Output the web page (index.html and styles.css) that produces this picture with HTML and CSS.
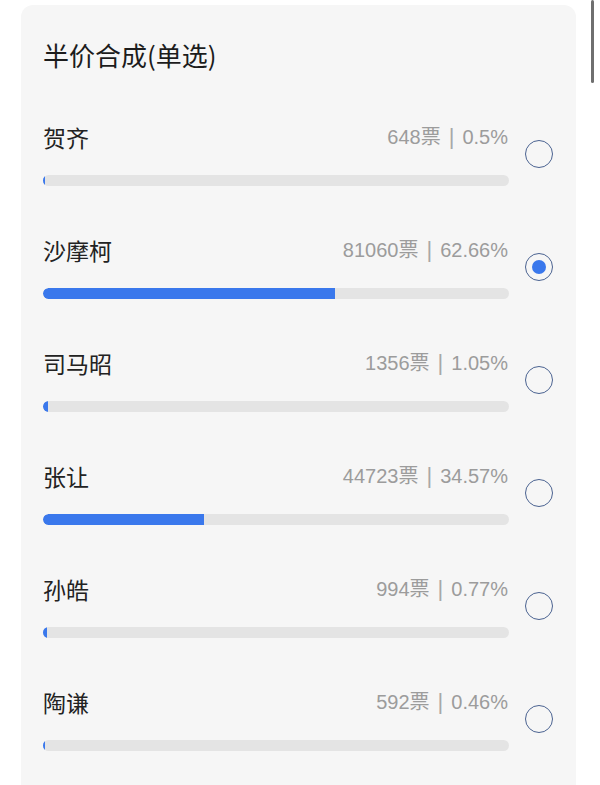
FILE: index.html
```html
<!DOCTYPE html>
<html lang="zh">
<head>
<meta charset="utf-8">
<title>半价合成(单选)</title>
<link rel="stylesheet" href="styles.css">
</head>
<body>
<div class="scrollbar"></div>
<section class="card">
  <h1 class="title">半价合成(单选)</h1>
  <ul class="options">
    <li class="option">
      <div class="info">
        <div class="head"><span class="name">贺齐</span><span class="stats">648票<span class="sep">|</span>0.5%</span></div>
        <div class="bar"><div class="fill" style="width:0.5%"></div></div>
      </div>
      <span class="radio"></span>
    </li>
    <li class="option">
      <div class="info">
        <div class="head"><span class="name">沙摩柯</span><span class="stats">81060票<span class="sep">|</span>62.66%</span></div>
        <div class="bar"><div class="fill" style="width:62.66%"></div></div>
      </div>
      <span class="radio checked"></span>
    </li>
    <li class="option">
      <div class="info">
        <div class="head"><span class="name">司马昭</span><span class="stats">1356票<span class="sep">|</span>1.05%</span></div>
        <div class="bar"><div class="fill" style="width:1.05%"></div></div>
      </div>
      <span class="radio"></span>
    </li>
    <li class="option">
      <div class="info">
        <div class="head"><span class="name">张让</span><span class="stats">44723票<span class="sep">|</span>34.57%</span></div>
        <div class="bar"><div class="fill" style="width:34.57%"></div></div>
      </div>
      <span class="radio"></span>
    </li>
    <li class="option">
      <div class="info">
        <div class="head"><span class="name">孙皓</span><span class="stats">994票<span class="sep">|</span>0.77%</span></div>
        <div class="bar"><div class="fill" style="width:0.77%"></div></div>
      </div>
      <span class="radio"></span>
    </li>
    <li class="option">
      <div class="info">
        <div class="head"><span class="name">陶谦</span><span class="stats">592票<span class="sep">|</span>0.46%</span></div>
        <div class="bar"><div class="fill" style="width:0.46%"></div></div>
      </div>
      <span class="radio"></span>
    </li>
  </ul>
</section>
</body>
</html>
```

FILE: styles.css
```css
html, body {
  margin: 0;
  padding: 0;
  background: #ffffff;
}
body {
  font-family: "Noto Sans CJK SC", "Noto Sans", sans-serif;
  color: #222222;
  overflow: hidden;
  height: 785px;
}
.scrollbar {
  position: absolute;
  left: 591px;
  top: 0;
  width: 3px;
  height: 83px;
  border-radius: 2px;
  background: #6f6f6f;
}
.card {
  margin: 5px 0 0 21px;
  width: 555px;
  height: 780px;
  box-sizing: border-box;
  padding: 33px 23px 0 22px;
  background: #f6f6f6;
  border-radius: 12px 12px 0 0;
}
.title {
  margin: 0;
  font-size: 26px;
  font-weight: 400;
  line-height: 34px;
  color: #1c1c1c;
}
.options {
  list-style: none;
  margin: 50px 0 0 0;
  padding: 0;
}
.option {
  display: flex;
  align-items: center;
  gap: 16px;
  margin-bottom: 49px;
}
.option:last-child {
  margin-bottom: 0;
}
.info {
  flex: 1;
  min-width: 0;
}
.head {
  display: flex;
  justify-content: space-between;
  align-items: center;
  height: 30px;
}
.name {
  font-size: 23px;
  line-height: 30px;
  color: #222222;
}
.stats {
  font-family: "Liberation Sans", "Noto Sans CJK SC", sans-serif;
  font-size: 20px;
  line-height: 30px;
  color: #9c9c9c;
  margin-right: 1px;
}
.stats .sep {
  display: inline-block;
  margin: 0 8px;
  font-size: 22px;
  color: #a8a8a8;
}
.bar {
  margin-top: 23px;
  height: 11px;
  border-radius: 6px;
  background: #e4e4e4;
  overflow: hidden;
}
.fill {
  height: 100%;
  min-width: 2px;
  background: #3a78ec;
  border-radius: 6px 0 0 6px;
}
.radio {
  flex: none;
  width: 28px;
  height: 28px;
  box-sizing: border-box;
  border: 1.7px solid #4b6391;
  border-radius: 50%;
  display: flex;
  align-items: center;
  justify-content: center;
}
.radio.checked::after {
  content: "";
  width: 14px;
  height: 14px;
  border-radius: 50%;
  background: #3a78ec;
}
```
